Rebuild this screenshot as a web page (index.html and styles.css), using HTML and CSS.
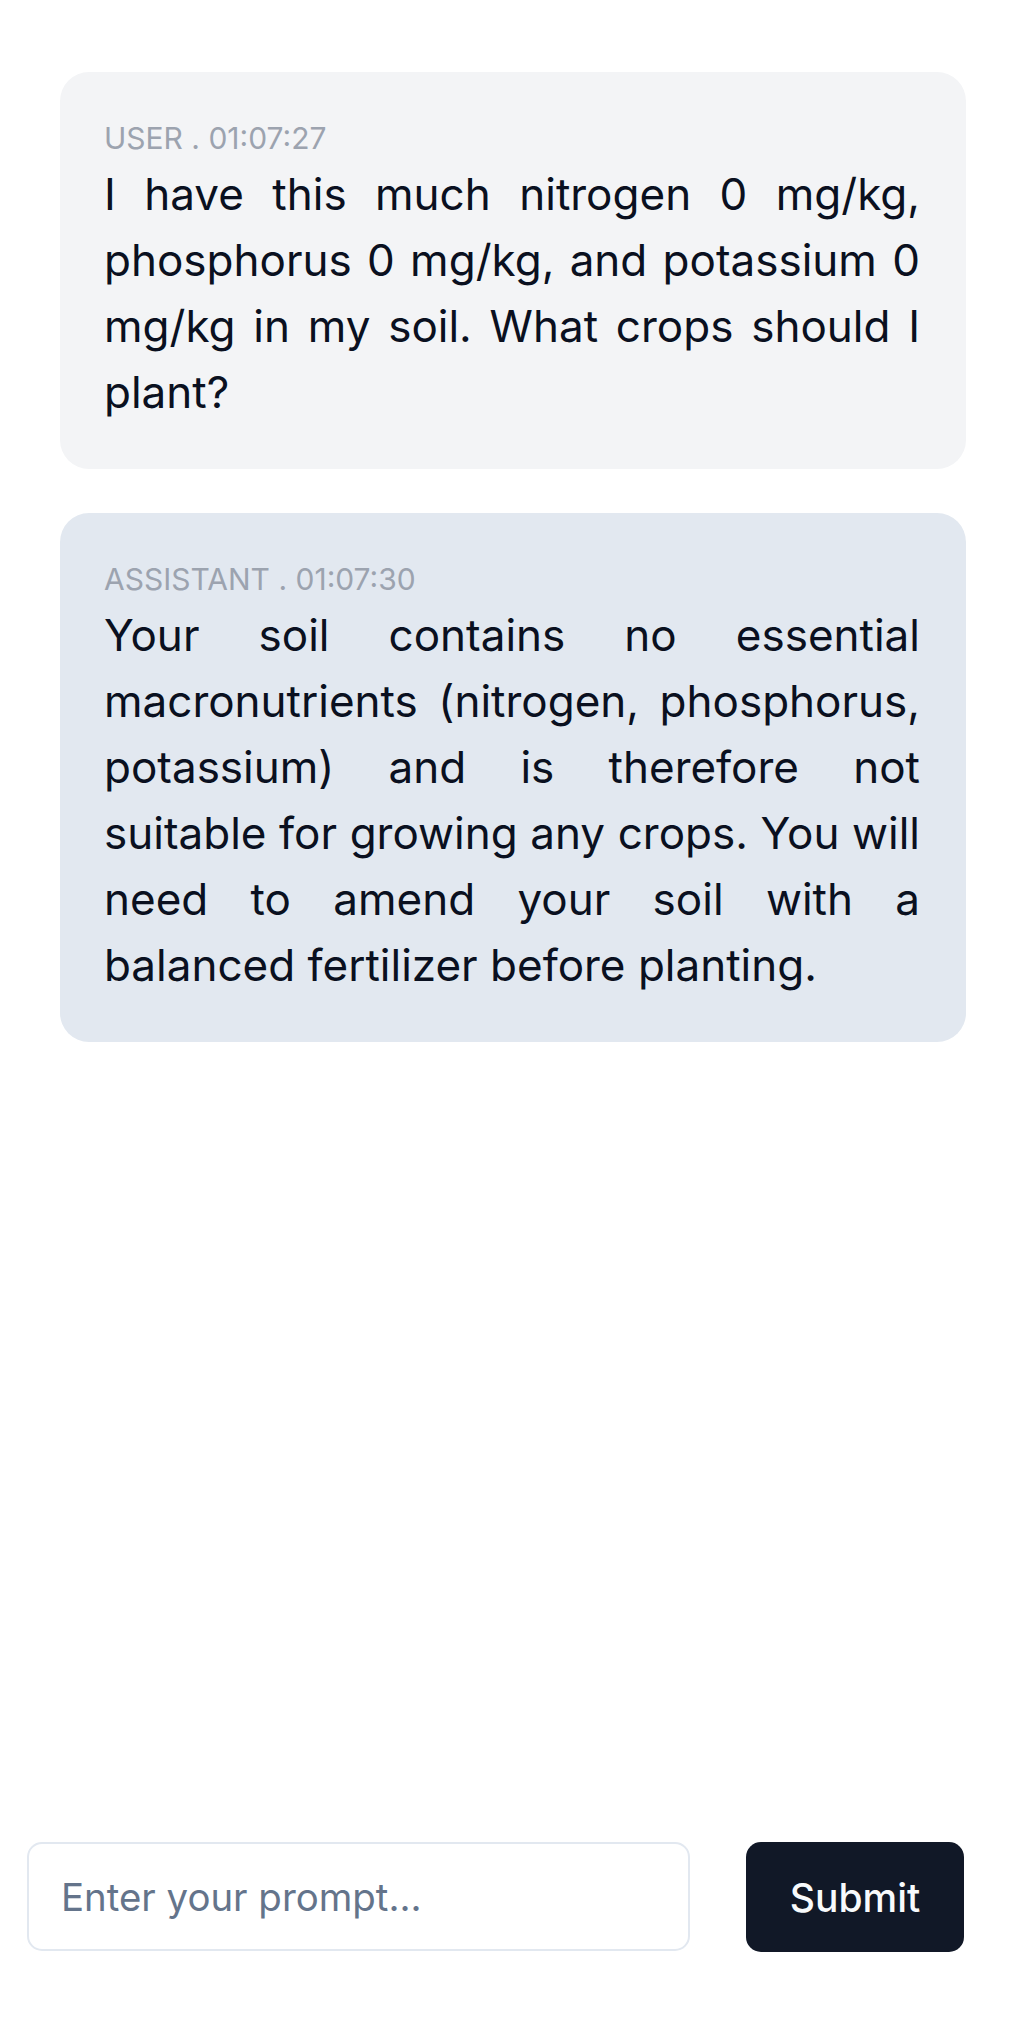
FILE: index.html
```
<!DOCTYPE html>
<html lang="en">
<head>
<meta charset="utf-8">
<title>Chat</title>
<link rel="stylesheet" href="styles.css">
</head>
<body>
<div class="page">
  <main class="messages">
    <article class="message message-user">
      <div class="meta">USER . 01:07:27</div>
      <p class="content">I have this much nitrogen 0 mg/kg, phosphorus 0 mg/kg, and potassium 0 mg/kg in my soil. What crops should I plant?</p>
    </article>
    <article class="message message-assistant">
      <div class="meta">ASSISTANT . 01:07:30</div>
      <p class="content">Your soil contains no essential macronutrients (nitrogen, phosphorus, potassium) and is therefore not suitable for growing any crops. You will need to amend your soil with a balanced fertilizer before planting.</p>
    </article>
  </main>
  <form class="composer">
    <input class="prompt" type="text" placeholder="Enter your prompt...">
    <button class="submit" type="button">Submit</button>
  </form>
</div>
</body>
</html>
```
FILE: styles.css
```
* { box-sizing: border-box; }
html, body { margin: 0; padding: 0; background: #ffffff; }
body {
  font-family: Inter, "Noto Sans", "Liberation Sans", sans-serif;
  color: #020817;
}
.page {
  min-height: 2024px;
  display: flex;
  flex-direction: column;
}
.messages {
  display: flex;
  flex-direction: column;
  gap: 44px;
  padding: 72px 66px 0 60px;
}
.message {
  border-radius: 29px;
  padding: 44px 46px 44px 44px;
}
.message-user { background: #f3f4f6; }
.message-assistant { background: #e2e8f0; }
.meta {
  font-size: 30px;
  line-height: 44px;
  margin-bottom: 1px;
  color: #9ca3af;
}
.content {
  margin: 0;
  font-size: 44px;
  line-height: 66px;
  text-align: justify;
  color: #0a1020;
}
.composer {
  margin-top: auto;
  display: flex;
  gap: 56px;
  padding: 0 68px 72px 27px;
}
.prompt {
  flex: 1 1 0;
  min-width: 0;
  height: 109px;
  border: 2px solid #e2e8f0;
  border-radius: 15px;
  padding: 0 32px;
  font-family: Inter, "Noto Sans", "Liberation Sans", sans-serif;
  font-size: 38.4px;
  color: #0f172a;
  background: #ffffff;
  outline: none;
}
.prompt::placeholder { color: #64748b; }
.submit {
  flex: 0 0 218px;
  width: 218px;
  height: 110px;
  border: 0;
  border-radius: 15px;
  background: #111827;
  color: #f8fafc;
  font-family: Inter, "Noto Sans", "Liberation Sans", sans-serif;
  font-size: 39px;
  font-weight: 500;
}
```
